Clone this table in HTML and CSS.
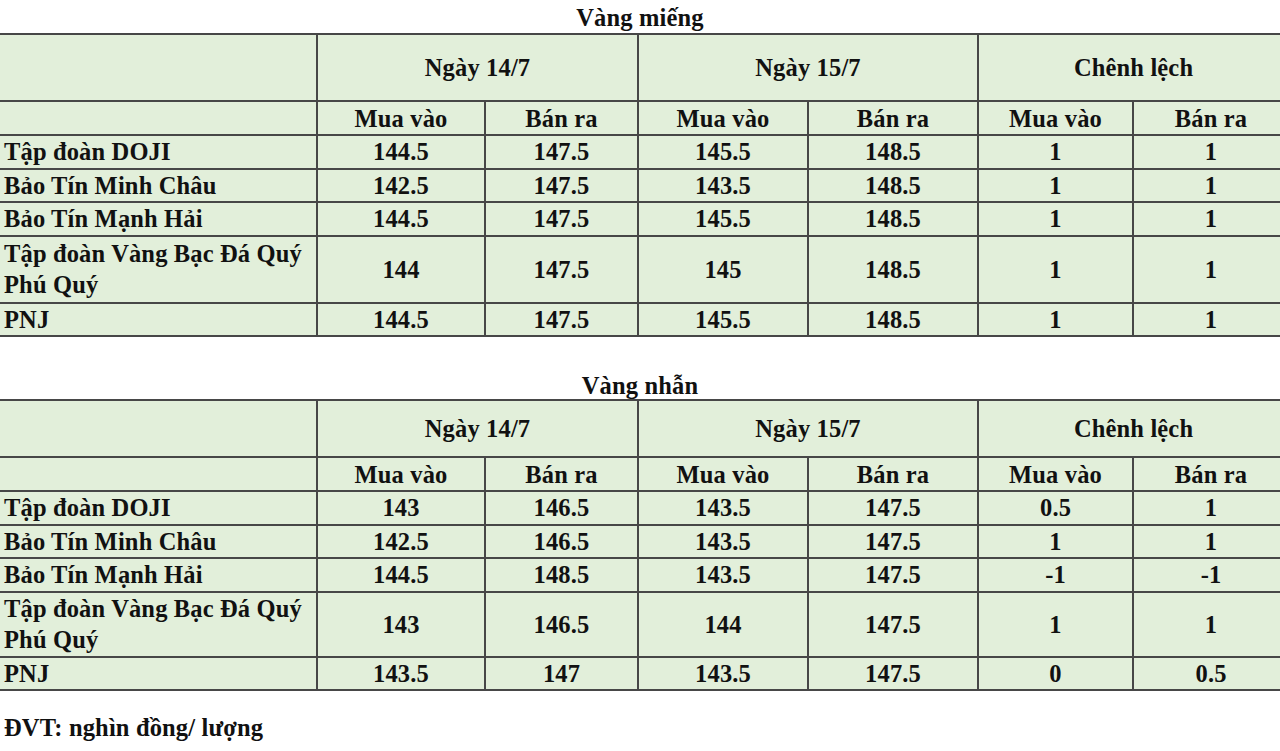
FILE: index.html
```html
<!DOCTYPE html>
<html lang="vi">
<head>
<meta charset="utf-8">
<title>Giá vàng</title>
<link rel="stylesheet" href="styles.css">
</head>
<body>
<div class="page">
  <h2 class="title">Vàng miếng</h2>
  <table class="price-table t1">
    <colgroup>
      <col class="c-name"><col class="c2"><col class="c3"><col class="c4"><col class="c5"><col class="c6"><col class="c7">
    </colgroup>
    <tr class="head1">
      <td class="name"></td>
      <td colspan="2">Ngày 14/7</td>
      <td colspan="2">Ngày 15/7</td>
      <td colspan="2" class="last">Chênh lệch</td>
    </tr>
    <tr class="head2">
      <td class="name"></td>
      <td>Mua vào</td><td>Bán ra</td><td>Mua vào</td><td>Bán ra</td><td>Mua vào</td><td class="last">Bán ra</td>
    </tr>
    <tr class="row"><td class="name">Tập đoàn DOJI</td><td>144.5</td><td>147.5</td><td>145.5</td><td>148.5</td><td>1</td><td class="last">1</td></tr>
    <tr class="row"><td class="name">Bảo Tín Minh Châu</td><td>142.5</td><td>147.5</td><td>143.5</td><td>148.5</td><td>1</td><td class="last">1</td></tr>
    <tr class="row"><td class="name">Bảo Tín Mạnh Hải</td><td>144.5</td><td>147.5</td><td>145.5</td><td>148.5</td><td>1</td><td class="last">1</td></tr>
    <tr class="row double"><td class="name">Tập đoàn Vàng Bạc Đá Quý<br>Phú Quý</td><td>144</td><td>147.5</td><td>145</td><td>148.5</td><td>1</td><td class="last">1</td></tr>
    <tr class="row"><td class="name">PNJ</td><td>144.5</td><td>147.5</td><td>145.5</td><td>148.5</td><td>1</td><td class="last">1</td></tr>
  </table>

  <h2 class="title second">Vàng nhẫn</h2>
  <table class="price-table t2">
    <colgroup>
      <col class="c-name"><col class="c2"><col class="c3"><col class="c4"><col class="c5"><col class="c6"><col class="c7">
    </colgroup>
    <tr class="head1">
      <td class="name"></td>
      <td colspan="2">Ngày 14/7</td>
      <td colspan="2">Ngày 15/7</td>
      <td colspan="2" class="last">Chênh lệch</td>
    </tr>
    <tr class="head2">
      <td class="name"></td>
      <td>Mua vào</td><td>Bán ra</td><td>Mua vào</td><td>Bán ra</td><td>Mua vào</td><td class="last">Bán ra</td>
    </tr>
    <tr class="row"><td class="name">Tập đoàn DOJI</td><td>143</td><td>146.5</td><td>143.5</td><td>147.5</td><td>0.5</td><td class="last">1</td></tr>
    <tr class="row"><td class="name">Bảo Tín Minh Châu</td><td>142.5</td><td>146.5</td><td>143.5</td><td>147.5</td><td>1</td><td class="last">1</td></tr>
    <tr class="row"><td class="name">Bảo Tín Mạnh Hải</td><td>144.5</td><td>148.5</td><td>143.5</td><td>147.5</td><td>-1</td><td class="last">-1</td></tr>
    <tr class="row double"><td class="name">Tập đoàn Vàng Bạc Đá Quý<br>Phú Quý</td><td>143</td><td>146.5</td><td>144</td><td>147.5</td><td>1</td><td class="last">1</td></tr>
    <tr class="row"><td class="name">PNJ</td><td>143.5</td><td>147</td><td>143.5</td><td>147.5</td><td>0</td><td class="last">0.5</td></tr>
  </table>

  <p class="unit">ĐVT: nghìn đồng/ lượng</p>
</div>
</body>
</html>
```

FILE: styles.css
```css
html, body {
  margin: 0;
  padding: 0;
  background: #ffffff;
  overflow: hidden;
}

.page {
  width: 1280px;
  font-family: "Liberation Serif", "Times New Roman", serif;
  font-weight: bold;
  font-size: 24.5px;
  letter-spacing: 0.15px;
  color: #111111;
}

.title {
  margin: 0;
  height: 33px;
  line-height: 31px;
  padding-top: 2px;
  box-sizing: border-box;
  text-align: center;
  font-size: 24.5px;
  font-weight: bold;
}

.title.second {
  margin-top: 29px;
  padding-top: 4px;
}

.price-table {
  width: 1288px;
  table-layout: fixed;
  border-collapse: collapse;
  background: #e2efda;
}

.c-name { width: 317px; }
.c2 { width: 168px; }
.c3 { width: 153px; }
.c4 { width: 170px; }
.c5 { width: 170px; }
.c6 { width: 155px; }
.c7 { width: 155px; }

.price-table td {
  border: 2px solid #474747;
  padding: 0 4px;
  text-align: center;
  vertical-align: middle;
  line-height: 31px;
  white-space: nowrap;
}

.price-table td.name {
  text-align: left;
  border-left: none;
}

.price-table td.last {
  border-right: none;
}

.t1 .head1 { height: 67px; }
.t2 .head1 { height: 57px; }
.head2 { height: 34px; }
.row { height: 33.5px; }
.t1 .row.double { height: 67px; }
.t2 .row.double { height: 65px; }

.unit {
  margin: 20px 0 0 4px;
  line-height: 33px;
  font-size: 24.5px;
}
```
